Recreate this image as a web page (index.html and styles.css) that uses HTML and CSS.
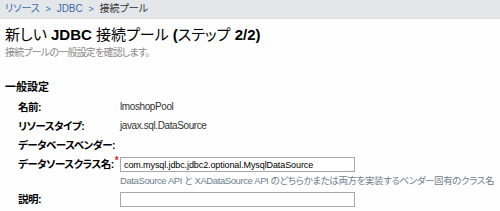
FILE: index.html
```html
<!DOCTYPE html>
<html lang="ja">
  <head>
    <meta charset="UTF-8" />
    <title>新しい JDBC 接続プール (ステップ 2/2)</title>
    <link rel="stylesheet" href="styles.css">
  </head>
  <body>
    <!-- Breadcrumbs -->
    <div class="crumbs">
      <a href="#">リソース</a>
      <span class="sep">&gt;</span>
      <a href="#">JDBC</a>
      <span class="sep">&gt;</span>
      <span class="current">接続プール</span>
    </div>

    <div class="page">
      <h1 class="title">新しい <b>JDBC</b> 接続プール <b>(</b>ステップ <b>2/2)</b></h1>
      <p class="subtitle">接続プールの一般設定を確認します。</p>

      <h2 class="section">一般設定</h2>

      <table class="props">
        <tr>
          <th>名前:</th>
          <td>lmoshopPool</td>
        </tr>
        <tr>
          <th>リソースタイプ:</th>
          <td>javax.sql.DataSource</td>
        </tr>
        <tr>
          <th>データベースベンダー:</th>
          <td></td>
        </tr>
        <tr class="with-input">
          <th>データソースクラス名:<span class="req">*</span></th>
          <td>
            <input type="text" class="field" value="com.mysql.jdbc.jdbc2.optional.MysqlDataSource" />
            <div class="help">DataSource API と XADataSource API のどちらかまたは両方を実装するベンダー固有のクラス名</div>
          </td>
        </tr>
        <tr>
          <th>説明:</th>
          <td><input type="text" class="field" /></td>
        </tr>
      </table>
    </div>
  </body>
</html>
```

FILE: styles.css
```css
body {
  margin: 0;
  background-color: #fefefe;
  font-family: "Liberation Sans", "Noto Sans CJK JP", sans-serif;
  font-feature-settings: "palt";
  color: #000;
}

.crumbs {
  height: 18px;
  line-height: 18px;
  padding-left: 5px;
  background-color: #e3e7ea;
  border-bottom: 1px solid #dadee2;
  font-size: 10px;
}

.crumbs a {
  color: #3b6aa5;
  text-decoration: none;
}

.crumbs .sep {
  color: #3b6aa5;
  font-size: 9px;
  margin: 0 3px;
}

.crumbs .current {
  color: #333;
}

.page {
  padding: 0 5px;
}

.title {
  margin: 7px 0 0;
  font-size: 15px;
  font-weight: normal;
  line-height: 18px;
}

.title b {
  font-weight: bold;
}

.subtitle {
  margin: 2px 0 0;
  font-size: 10px;
  letter-spacing: -0.8px;
  line-height: 14px;
  color: #8a8a8a;
}

.section {
  margin: 20px 0 0;
  font-size: 11px;
  font-weight: bold;
  line-height: 14px;
}

.props {
  margin: 4px 0 0 13px;
  border-collapse: collapse;
}

.props th {
  width: 102px;
  padding: 2px 0 3px;
  text-align: left;
  vertical-align: top;
  font-size: 10.5px;
  letter-spacing: -0.5px;
  font-weight: bold;
  line-height: 14px;
  white-space: nowrap;
}

.props td {
  padding: 2px 0 3px;
  vertical-align: top;
  font-size: 10px;
  letter-spacing: -0.4px;
  color: #333;
  line-height: 14px;
}

.props .with-input th,
.props .with-input td {
  padding-top: 2px;
}

.req {
  color: #d22;
  font-size: 10px;
  position: relative;
  top: -4px;
  margin-left: 1px;
}

.field {
  box-sizing: border-box;
  display: block;
  width: 235px;
  height: 15px;
  margin: 0;
  padding: 0 3px;
  border: 1px solid #a8a8a8;
  font-family: inherit;
  font-size: 9px;
  letter-spacing: -0.1px;
  color: #000;
}

.help {
  margin-top: 3px;
  font-size: 9.5px;
  letter-spacing: -0.4px;
  line-height: 12px;
  color: #6e7e8e;
  white-space: nowrap;
}
```
